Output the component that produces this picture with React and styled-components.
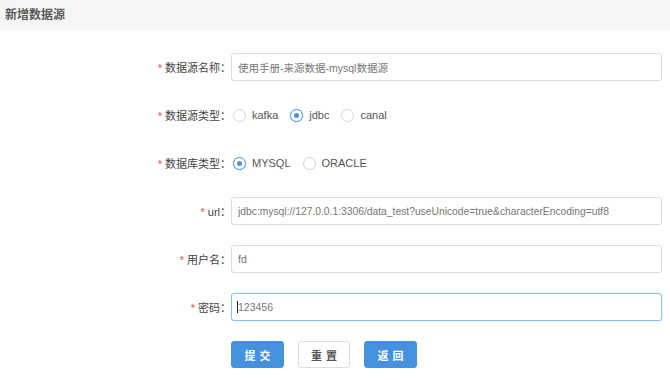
import React from "react";
import styled, { createGlobalStyle, css } from "styled-components";

const Global = createGlobalStyle`
  html, body { margin: 0; padding: 0; background: #fff; }
  body {
    font-family: "Liberation Sans", "Noto Sans CJK SC", sans-serif;
    font-size: 11px;
    color: #555;
  }
  * { box-sizing: border-box; }
`;

const Page = styled.div`
  width: 670px;
  height: 380px;
  overflow: hidden;
`;

const Header = styled.div`
  height: 30px;
  line-height: 30px;
  padding-left: 5px;
  background: #f5f5f5;
  font-size: 12px;
  font-weight: bold;
  color: #5a5a5a;
`;

const Form = styled.form`
  display: flex;
  flex-direction: column;
  gap: 20px;
  padding: 23px 8px 0 0;
`;

const Row = styled.div`
  display: grid;
  grid-template-columns: 231px 1fr;
  align-items: center;
  height: 28px;
`;

const Label = styled.label`
  text-align: right;
  font-size: 11px;
  color: #444;
  white-space: nowrap;
`;

const Star = styled.span`
  color: #e4504a;
  margin-right: 3px;
`;

const InputWrap = styled.div`
  position: relative;
  height: 28px;
  ${(p) =>
    p.$focused &&
    css`
      &::after {
        content: "";
        position: absolute;
        left: 6px;
        top: 8px;
        width: 1px;
        height: 12px;
        background: #222;
      }
    `}
`;

const Input = styled.input`
  width: 100%;
  height: 28px;
  padding: 0 6px;
  border: 1px solid ${(p) => (p.$focused ? "#8ec0ec" : "#dcdcdc")};
  border-radius: 3px;
  background: #fff;
  font-family: "Liberation Sans", "Noto Sans CJK SC", sans-serif;
  font-size: ${(p) => (p.$small ? "10.3px" : "10.5px")};
  color: #777;
  outline: none;
  box-shadow: ${(p) => (p.$focused ? "0 0 2px rgba(102,175,233,0.4)" : "none")};
`;

const RadioGroup = styled.div`
  display: flex;
  align-items: center;
  padding-left: 2px;
`;

const RadioItem = styled.label`
  display: flex;
  align-items: center;
  gap: 6px;
  margin-right: 12px;
  font-size: 11px;
  color: #555;
`;

const RadioCircle = styled.span`
  position: relative;
  width: 13px;
  height: 13px;
  border-radius: 50%;
  border: 1px solid ${(p) => (p.$checked ? "#4a90e2" : "#d4d4d4")};
  background: #fff;
  box-shadow: ${(p) => (p.$checked ? "0 0 2px rgba(74,144,226,0.35)" : "none")};
  ${(p) =>
    p.$checked &&
    css`
      &::after {
        content: "";
        position: absolute;
        left: 3px;
        top: 3px;
        width: 5px;
        height: 5px;
        border-radius: 50%;
        background: #4a90e2;
      }
    `}
`;

const Buttons = styled.div`
  display: flex;
  gap: 14px;
  padding-left: 231px;
  height: 27px;
`;

const Button = styled.button`
  width: ${(p) => (p.$light ? "52px" : "53px")};
  height: 27px;
  border-radius: 3px;
  border: 1px solid ${(p) => (p.$light ? "#dcdcdc" : "#4690e0")};
  background: ${(p) => (p.$light ? "#fff" : "#4690e0")};
  color: ${(p) => (p.$light ? "#555" : "#fff")};
  font-family: "Liberation Sans", "Noto Sans CJK SC", sans-serif;
  font-size: 11px;
  font-weight: bold;
  letter-spacing: 4px;
  padding: 0 0 0 4px;
  cursor: pointer;
`;

function Radio({ checked, children }) {
  return (
    <RadioItem>
      <RadioCircle $checked={checked} />
      {children}
    </RadioItem>
  );
}

function Field({ label, value, focused, small }) {
  return (
    <Row>
      <Label>
        <Star>*</Star>
        {label}：
      </Label>
      <InputWrap $focused={focused}>
        <Input readOnly value={value} $focused={focused} $small={small} />
      </InputWrap>
    </Row>
  );
}

export default function App() {
  return (
    <Page>
      <Global />
      <Header>新增数据源</Header>
      <Form onSubmit={(e) => e.preventDefault()}>
        <Field label="数据源名称" value="使用手册-来源数据-mysql数据源" />
        <Row>
          <Label>
            <Star>*</Star>数据源类型：
          </Label>
          <RadioGroup>
            <Radio>kafka</Radio>
            <Radio checked>jdbc</Radio>
            <Radio>canal</Radio>
          </RadioGroup>
        </Row>
        <Row>
          <Label>
            <Star>*</Star>数据库类型：
          </Label>
          <RadioGroup>
            <Radio checked>MYSQL</Radio>
            <Radio>ORACLE</Radio>
          </RadioGroup>
        </Row>
        <Field
          label="url"
          small
          value="jdbc:mysql://127.0.0.1:3306/data_test?useUnicode=true&characterEncoding=utf8"
        />
        <Field label="用户名" value="fd" />
        <Field label="密码" value="123456" focused />
        <Buttons>
          <Button type="button">提交</Button>
          <Button type="button" $light>
            重置
          </Button>
          <Button type="button">返回</Button>
        </Buttons>
      </Form>
    </Page>
  );
}
